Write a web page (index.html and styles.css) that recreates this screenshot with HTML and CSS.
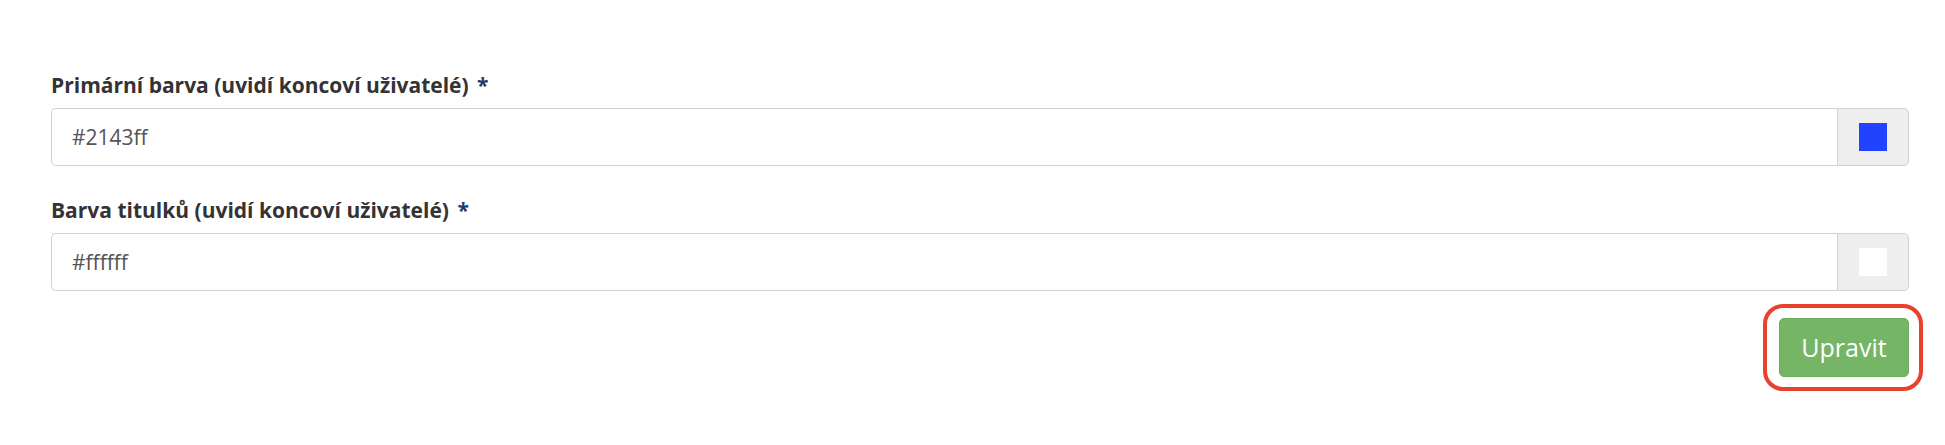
FILE: index.html
```html
<!DOCTYPE html>
<html lang="cs">
<head>
<meta charset="utf-8">
<title>Barvy</title>
<link rel="stylesheet" href="styles.css">
</head>
<body>
<form class="form">
  <div class="group">
    <label class="label">Primární barva (uvidí koncoví uživatelé) <span class="req">*</span></label>
    <div class="input-group">
      <input class="control" type="text" value="#2143ff">
      <span class="addon"><i class="swatch swatch-blue"></i></span>
    </div>
  </div>
  <div class="group">
    <label class="label">Barva titulků (uvidí koncoví uživatelé) <span class="req">*</span></label>
    <div class="input-group">
      <input class="control" type="text" value="#ffffff">
      <span class="addon"><i class="swatch swatch-white"></i></span>
    </div>
  </div>
  <div class="actions">
    <span class="highlight"><button class="btn" type="button">Upravit</button></span>
  </div>
</form>
</body>
</html>
```
FILE: styles.css
```css
html, body {
  margin: 0;
  padding: 0;
  background: #fff;
}
body {
  font-family: "Open Sans", "Liberation Sans", sans-serif;
  color: #333;
  min-height: 445px;
}
.form {
  padding: 70px 36px 60px 51px;
}
.group {
  margin-bottom: 29px;
}
.label {
  display: block;
  font-size: 21px;
  line-height: 30px;
  font-weight: 700;
  color: #333;
  margin-bottom: 8px;
}
.req {
  color: #26396b;
  margin-left: 3px;
}
.input-group {
  display: flex;
  height: 58px;
}
.control {
  flex: 1;
  min-width: 0;
  box-sizing: border-box;
  height: 58px;
  margin: 0;
  padding: 0 20px;
  border: 1px solid #d2d2d2;
  border-right: none;
  border-radius: 5px 0 0 5px;
  font-family: "Open Sans", "Liberation Sans", sans-serif;
  font-size: 21px;
  color: #555;
  background: #fff;
  outline: none;
}
.addon {
  box-sizing: border-box;
  width: 72px;
  height: 58px;
  display: flex;
  align-items: center;
  justify-content: center;
  background: #eee;
  border: 1px solid #d2d2d2;
  border-radius: 0 5px 5px 0;
}
.swatch {
  display: block;
  width: 28px;
  height: 28px;
}
.swatch-blue { background: #2143ff; }
.swatch-white { background: #fff; }
.actions {
  display: flex;
  justify-content: flex-end;
  margin-top: -2px;
}
.highlight {
  position: relative;
  display: inline-block;
}
.highlight::after {
  content: "";
  position: absolute;
  top: -14px;
  bottom: -14px;
  left: -16px;
  right: -14px;
  border: 4px solid #e8412c;
  border-radius: 20px;
  pointer-events: none;
}
.btn {
  display: block;
  box-sizing: border-box;
  width: 130px;
  height: 59px;
  margin: 0;
  padding: 0;
  border: 1px solid #69ad5c;
  border-radius: 5px;
  background: #74b566;
  color: #fff;
  font-family: "Open Sans", "Liberation Sans", sans-serif;
  font-size: 25px;
  line-height: 57px;
  cursor: pointer;
}
```
